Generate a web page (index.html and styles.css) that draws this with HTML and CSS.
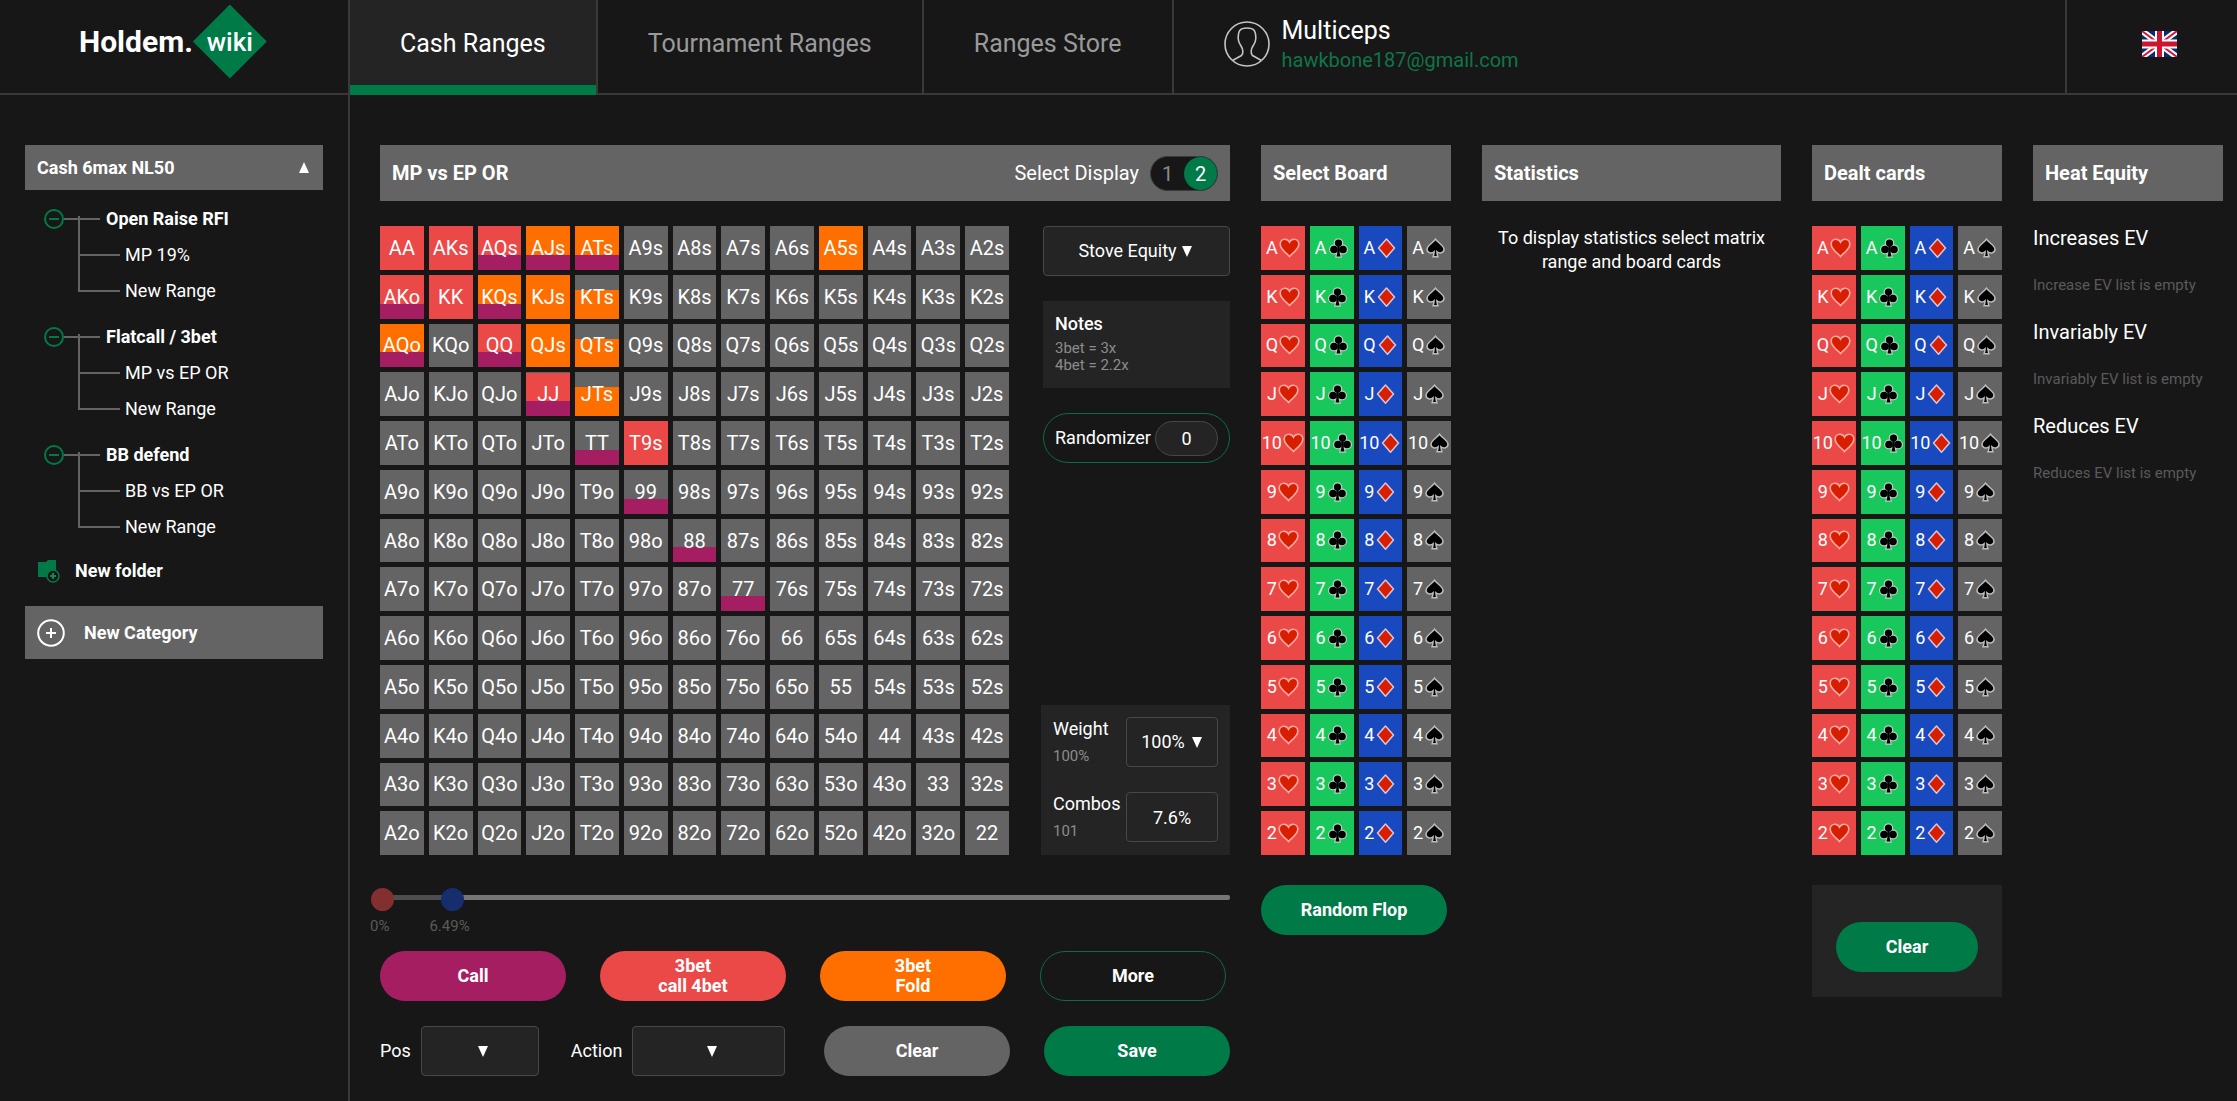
FILE: index.html
```html
<!DOCTYPE html>
<html lang="en">
<head>
<meta charset="utf-8">
<meta name="viewport" content="width=device-width, initial-scale=1">
<title>Holdem.wiki - Cash Ranges</title>
<link rel="stylesheet" href="styles.css">
</head>
<body>
<svg class="sprite" aria-hidden="true">
  <symbol id="suit-hearts" viewBox="0 0 21 20">
    <path d="M10.5 18.4C8.5 16 1.2 11.500 1.200 6.200 1.200 3.200 3.300 1.200 5.900 1.200c2 0 3.700 1.100 4.600 3 .9-1.900 2.600-3 4.600-3 2.600 0 4.700 2 4.700 5C19.800 11.500 12.500 16 10.500 18.400z" fill="#d81e00" stroke="#ffaaa2" stroke-width="1.600"/>
  </symbol>
  <symbol id="suit-clubs" viewBox="0 0 21 20">
    <g fill="#000" stroke="#b9cfc0" stroke-width="2.400">
      <circle cx="10.500" cy="5" r="3.600"/><circle cx="6" cy="11.500" r="3.800"/><circle cx="15" cy="11.500" r="3.800"/><path d="M9.300 10h2.400v5l.8 3.600h-4l.8-3.600z"/>
    </g>
    <g fill="#000">
      <circle cx="10.500" cy="5" r="3.600"/><circle cx="6" cy="11.500" r="3.800"/><circle cx="15" cy="11.500" r="3.800"/><path d="M9.300 7h2.400v8l.8 3.600h-4l.8-3.600z"/>
    </g>
  </symbol>
  <symbol id="suit-diamonds" viewBox="0 0 21 20">
    <path d="M10.500 1 18.500 10 10.500 19.200 2.500 10z" fill="#d81e00" stroke="#d9c6d8" stroke-width="1.500" stroke-linejoin="round"/>
  </symbol>
  <symbol id="suit-spades" viewBox="0 0 21 20">
    <path d="M10.500 1.200C12.500 4.500 19 7.500 19 11.300c0 3.800-4.600 4.700-7.100 2.400.1 2 .5 3.600 1 5H8.100c.5-1.400.9-3 1-5C6.600 16 2 15.100 2 11.300 2 7.500 8.500 4.500 10.500 1.200z" fill="#000" stroke="#bcbcbc" stroke-width="1.500"/>
  </symbol>
</svg>

<header class="topbar">
  <a class="logo" href="#">
    <span>Holdem.</span>
    <span class="logo-mark">wiki</span>
  </a>
  <nav class="tabs">
    <a class="tab tab-active" href="#">Cash Ranges</a>
    <a class="tab" href="#">Tournament Ranges</a>
    <a class="tab" href="#">Ranges Store</a>
  </nav>
  <div class="user">
    <svg class="avatar" viewBox="0 0 46 46" fill="none" stroke="#c4c4c4" stroke-width="1.600" aria-hidden="true">
      <circle cx="23" cy="23" r="22"/>
      <path d="M8.500 39.500l9-5c1.200-.8 1.500-2 1.300-4.500-.1-2-.8-3.500-1.800-5-1.500-2.200-2.800-4-2.800-7.500 0-7.500 1.300-10.500 8.800-10.500s8.800 3 8.800 10.500c0 3.500-1.300 5.300-2.800 7.500-1 1.500-1.700 3-1.800 5-.2 2.500.1 3.700 1.300 4.500l9 5"/>
    </svg>
    <div>
      <div class="user-name">Multiceps</div>
      <a class="user-mail" href="#">hawkbone187@gmail.com</a>
    </div>
  </div>
  <button class="lang" type="button" aria-label="English">
    <svg width="35" height="26" viewBox="0 0 35 26" aria-hidden="true">
      <path fill="#0b2a6f" d="M0 0h35v26H0z"/>
      <path d="M0 0 35 26M35 0 0 26" stroke="#fff" stroke-width="6"/>
      <path d="M0 0 35 26M35 0 0 26" stroke="#cf1b3a" stroke-width="2"/>
      <path d="M17.500 0v26M0 13h35" stroke="#fff" stroke-width="9"/>
      <path d="M17.500 0v26M0 13h35" stroke="#cf1432" stroke-width="5"/>
    </svg>
  </button>
</header>

<div class="layout">
  <aside class="sidebar">
    <button class="category" type="button"><span>Cash 6max NL50</span>
      <svg width="10" height="11" viewBox="0 0 10 11" aria-hidden="true"><path d="M5 0 10 11H0z" fill="#fff"/></svg>
    </button>
    <section class="folder">
      <h2 class="folder-name"><button class="collapse" type="button" aria-label="Collapse"></button>Open Raise RFI</h2>
      <ul class="ranges"><li><a href="#">MP 19%</a></li><li><a href="#">New Range</a></li></ul>
    </section>
    <section class="folder">
      <h2 class="folder-name"><button class="collapse" type="button" aria-label="Collapse"></button>Flatcall / 3bet</h2>
      <ul class="ranges"><li><a href="#">MP vs EP OR</a></li><li><a href="#">New Range</a></li></ul>
    </section>
    <section class="folder">
      <h2 class="folder-name"><button class="collapse" type="button" aria-label="Collapse"></button>BB defend</h2>
      <ul class="ranges"><li><a href="#">BB vs EP OR</a></li><li><a href="#">New Range</a></li></ul>
    </section>
    <button class="new-folder" type="button">
      <svg width="23" height="24" viewBox="0 0 23 24" aria-hidden="true">
        <path d="M0 3h8l2-2h8v17H0z" fill="#007a47"/>
        <circle cx="15" cy="17" r="6" fill="#171717" stroke="#0a7549" stroke-width="1.500"/>
        <path d="M15 14v6M12 17h6" stroke="#0a8a54" stroke-width="2"/>
      </svg>New folder</button>
    <button class="new-category" type="button">
      <svg width="28" height="28" viewBox="0 0 28 28" fill="none" stroke="#fff" stroke-width="2" aria-hidden="true">
        <circle cx="14" cy="14" r="12.800"/><path d="M14 9v10M9 14h10"/>
      </svg>New Category</button>
  </aside>

  <main class="content">
    <section class="column">
      <div class="panel-title">
        <h1>MP vs EP OR</h1>
        <fieldset class="display">
          <legend>Select Display</legend>
          <span aria-hidden="true">Select Display</span>
          <div class="toggle">
            <label><input type="radio" name="display"><span>1</span></label>
            <label><input type="radio" name="display" checked><span>2</span></label>
          </div>
        </fieldset>
      </div>
      <div class="board">
        <div class="matrix" id="matrix"></div>
        <div class="tools">
          <select class="select select-equity" aria-label="Equity mode"><option>Stove Equity</option></select>
          <div class="notes">
            <h2>Notes</h2>
            <p>3bet = 3x<br>4bet = 2.2x</p>
          </div>
          <div class="randomizer"><label for="random">Randomizer</label><input id="random" type="text" value="0"></div>
          <div class="weights">
            <div class="weight-row">
              <div><label for="weight">Weight</label><p>100%</p></div>
              <select class="select select-weight" id="weight"><option>100%</option></select>
            </div>
            <div class="weight-row">
              <div><label for="combos">Combos</label><p>101</p></div>
              <input class="combo" id="combos" type="text" value="7.6%">
            </div>
          </div>
        </div>
      </div>
      <div class="range">
        <div class="range-track">
          <input class="thumb-red" type="range" min="0" max="100" step="0.1" value="0" aria-label="Range start">
          <input class="thumb-blue" type="range" min="0" max="100" step="0.1" value="8.4" aria-label="Range end">
        </div>
        <div class="range-labels"><span>0%</span><span>6.49%</span></div>
      </div>
      <div class="actions">
        <button class="pill pill-call" type="button">Call</button>
        <button class="pill pill-raise" type="button">3bet<br>call 4bet</button>
        <button class="pill pill-fold" type="button">3bet<br>Fold</button>
        <button class="pill pill-outline" type="button">More</button>
      </div>
      <div class="filters">
        <label for="pos">Pos</label>
        <select class="select select-pos" id="pos"><option></option></select>
        <label class="action-label" for="action">Action</label>
        <select class="select select-action" id="action"><option></option></select>
        <div class="filter-buttons">
          <button class="pill pill-gray" type="button">Clear</button>
          <button class="pill" type="button">Save</button>
        </div>
      </div>
    </section>

    <section class="column">
      <h2 class="panel-title">Select Board</h2>
      <div class="cards"></div>
      <button class="pill pill-flop" type="button">Random Flop</button>
    </section>

    <section class="column">
      <h2 class="panel-title">Statistics</h2>
      <p class="hint">To display statistics select matrix range and board cards</p>
    </section>

    <section class="column">
      <h2 class="panel-title">Dealt cards</h2>
      <div class="cards"></div>
      <div class="dealt-footer"><button class="pill" type="button">Clear</button></div>
    </section>

    <section class="column">
      <h2 class="panel-title">Heat Equity</h2>
      <dl class="heat">
        <dt>Increases EV</dt><dd>Increase EV list is empty</dd>
        <dt>Invariably EV</dt><dd>Invariably EV list is empty</dd>
        <dt>Reduces EV</dt><dd>Reduces EV list is empty</dd>
      </dl>
    </section>
  </main>
</div>
<script src="app.js"></script>
</body>
</html>
```
FILE: styles.css
```css
:root {
  --bg: #171717;
  --surface: #242424;
  --gray: #646464;
  --line: #393939;
  --edge: #484848;
  --muted: #8c8c8c;
  --dim: #5a5a5a;
  --green: #007a47;
  --red: #eb4848;
  --orange: #ff6f00;
  --call: #a61e62;
}

* { box-sizing: border-box; }

body {
  margin: 0;
  min-height: 100vh;
  display: flex;
  flex-direction: column;
  background: var(--bg);
  color: #fff;
  font: 18px/24px Roboto, "Liberation Sans", sans-serif;
}

h1, h2, p, ul, dl, dd { margin: 0; padding: 0; }
h1, h2 { font-size: inherit; }
ul { list-style: none; }
a { color: inherit; text-decoration: none; }
button, input, select { font: inherit; color: inherit; margin: 0; }
button { border: 0; cursor: pointer; padding: 0; }
.sprite { display: none; }

/* Top bar */
.topbar {
  display: flex;
  height: 95px;
  border-bottom: 2px solid var(--line);
}
.logo {
  display: flex;
  align-items: center;
  width: 350px;
  padding: 0 0 10px 79px;
  border-right: 2px solid var(--line);
  font-size: 30px;
  font-weight: 700;
}
.logo-mark {
  display: flex;
  align-items: center;
  justify-content: center;
  width: 74px;
  height: 74px;
  background: var(--green);
  clip-path: polygon(50% 0, 100% 50%, 50% 100%, 0 50%);
  font-size: 26px;
  font-weight: 500;
}
.tabs { display: flex; }
.tab {
  display: flex;
  align-items: center;
  padding: 0 50px 5px;
  border-right: 2px solid var(--line);
  color: #9a9a9a;
  font-size: 25px;
}
.tab-active {
  margin-bottom: -2px;
  padding-top: 10px;
  padding-bottom: 7px;
  border-bottom: 10px solid var(--green);
  border-right: 0;
  background: var(--surface);
  color: #fff;
  box-shadow: 2px 0 var(--line);
}
.tab-active + .tab { margin-left: 2px; }
.user {
  display: flex;
  align-items: center;
  gap: 12px;
  padding: 0 50px 5px;
}
.avatar { width: 46px; height: 46px; }
.user-name { font-size: 25px; line-height: 32px; }
.user-mail { display: block; font-size: 20px; line-height: 26px; color: #0f7549; }
.lang {
  width: 172px;
  margin-left: auto;
  padding: 0 0 5px 15px;
  background: none;
  border-left: 2px solid var(--line);
}
.lang svg { display: block; margin: auto; }

/* Sidebar */
.layout { display: flex; flex: 1; }
.sidebar {
  flex: none;
  width: 350px;
  padding: 50px 25px 30px;
  border-right: 2px solid var(--line);
}
.category, .new-category {
  display: flex;
  align-items: center;
  width: 100%;
  background: var(--gray);
  font-weight: 700;
}
.category {
  justify-content: space-between;
  height: 45px;
  margin-bottom: 11px;
  padding: 0 14px 0 12px;
}
.folder { margin-bottom: 10px; padding-left: 19px; }
.folder-name {
  position: relative;
  display: flex;
  align-items: center;
  gap: 42px;
  height: 36px;
}
.folder-name::after {
  content: "";
  position: absolute;
  left: 20px;
  width: 36px;
  height: 2px;
  background: var(--gray);
}
.collapse {
  width: 20px;
  height: 20px;
  border: 2px solid var(--green);
  border-radius: 50%;
  background: linear-gradient(var(--green), var(--green)) center / 10px 2px no-repeat;
}
.ranges { padding-left: 34px; }
.ranges li { position: relative; height: 36px; padding-left: 47px; line-height: 36px; }
.ranges li::before {
  content: "";
  position: absolute;
  left: 0;
  bottom: 17px;
  width: 40px;
  height: 38px;
  border: solid var(--gray);
  border-width: 0 0 2px 2px;
}
.new-folder {
  display: flex;
  align-items: center;
  gap: 14px;
  height: 36px;
  margin: -2px 0 17px;
  padding-left: 13px;
  background: none;
  font-weight: 700;
}
.new-category { gap: 19px; height: 53px; padding-left: 12px; }

/* Main columns */
.content {
  flex: 1;
  display: grid;
  grid-template-columns: 850fr 190fr 299fr 190fr 190fr;
  gap: 31px;
  align-items: start;
  padding: 50px 14px 25px 30px;
}
.column { min-width: 0; }
.panel-title {
  display: flex;
  align-items: center;
  justify-content: space-between;
  height: 56px;
  margin-bottom: 25px;
  padding: 0 12px;
  background: var(--gray);
  font-size: 20px;
  font-weight: 700;
}
.display {
  display: flex;
  align-items: center;
  gap: 11px;
  margin: 0;
  padding: 0;
  border: 0;
  font-weight: 400;
}
.display legend, .toggle input { position: absolute; opacity: 0; width: 1px; height: 1px; overflow: hidden; }
.toggle {
  display: flex;
  border: 1px solid #3c3c3c;
  border-radius: 18px;
  background: var(--bg);
}
.toggle span {
  display: block;
  width: 33px;
  height: 33px;
  border-radius: 50%;
  line-height: 34px;
  text-align: center;
  color: var(--muted);
}
.toggle input:checked + span { background: var(--green); color: #fff; }

.board { display: grid; grid-template-columns: 629fr 187fr; gap: 34px; }
.matrix { display: grid; grid-template-columns: repeat(13, 1fr); gap: 5px; }
.cell, .card {
  display: flex;
  align-items: center;
  justify-content: center;
  min-width: 0;
  aspect-ratio: 1;
  background: var(--gray);
}
.cell { font-size: 20px; }
.cell.raise { background: var(--red); }
.cell.fold { background: var(--orange); }
.cell.raise-call { background: linear-gradient(var(--red) 66%, var(--call) 66%); }
.cell.fold-call { background: linear-gradient(var(--orange) 66%, var(--call) 66%); }
.cell.part-fold { background: linear-gradient(var(--gray) 34%, var(--orange) 34%); }
.cell.part-call { background: linear-gradient(var(--gray) 66%, var(--call) 66%); }
.cell.part-raise-call { background: linear-gradient(var(--gray) 2%, var(--red) 2% 66%, var(--call) 66%); }

.cards { display: grid; grid-template-columns: repeat(4, 1fr); gap: 5px; margin-bottom: 30px; }
.card { gap: 1px; }
.card svg { flex: none; width: 21px; height: 20px; }
.card.hearts { background: var(--red); }
.card.clubs { background: #19c85c; }
.card.diamonds { background: #1849bf; }

/* Tools next to the matrix */
.tools { display: flex; flex-direction: column; gap: 25px; }
.select, .combo {
  height: 50px;
  border: 1px solid var(--edge);
  border-radius: 4px;
  background: var(--surface);
  text-align: center;
}
.select {
  appearance: none;
  background-image: url("data:image/svg+xml,%3Csvg xmlns='http://www.w3.org/2000/svg' width='10' height='11'%3E%3Cpath d='M0 0h10L5 11z' fill='%23fff'/%3E%3C/svg%3E");
  background-repeat: no-repeat;
  background-position: center;
  text-align-last: center;
}
.select-equity { padding-right: 18px; background-position: calc(50% + 50px) 50%; }
.notes { height: 87px; padding: 11px 12px; background: var(--surface); }
.notes h2 { font-weight: 500; }
.notes p { padding-top: 4px; font-size: 15px; line-height: 17px; color: var(--muted); }
.randomizer {
  display: flex;
  align-items: center;
  justify-content: space-between;
  height: 50px;
  padding: 0 11px;
  border: 1px solid #0d6b45;
  border-radius: 25px;
}
.randomizer input {
  width: 63px;
  height: 35px;
  border: 1px solid var(--edge);
  border-radius: 18px;
  background: var(--surface);
  text-align: center;
}
.weights {
  display: flex;
  flex-direction: column;
  gap: 25px;
  margin: auto 0 0 -2px;
  padding: 12px 12px 13px;
  background: var(--surface);
}
.weight-row { display: flex; justify-content: space-between; height: 50px; }
.weight-row p { padding-top: 4px; font-size: 15px; line-height: 22px; color: var(--muted); }
.select-weight, .combo { width: 92px; }
.select-weight { padding-right: 18px; background-position: calc(50% + 25px) 50%; }

/* Percent range */
.range { padding: 40px 0 13px; }
.range-track {
  position: relative;
  height: 5px;
  border-radius: 2px;
  background: linear-gradient(90deg, #4d4d4d 8%, #757575 8%);
}
.range-track input {
  position: absolute;
  top: -8px;
  left: -9px;
  width: calc(100% + 9px);
  height: 25px;
  appearance: none;
  background: none;
  pointer-events: none;
}
.range-track input::-webkit-slider-thumb {
  appearance: none;
  width: 23px;
  height: 23px;
  border-radius: 50%;
  background: #842f2f;
  pointer-events: auto;
}
.range-track .thumb-blue::-webkit-slider-thumb { background: #172e6e; }
.range-labels {
  display: flex;
  gap: 40px;
  margin: 14px 0 0 -10px;
  font-size: 15px;
  color: var(--dim);
}

/* Buttons and filters */
.pill {
  width: 186px;
  height: 50px;
  border-radius: 25px;
  background: var(--green);
  font-weight: 700;
  line-height: 20px;
}
.pill-call { background: var(--call); }
.pill-raise { background: var(--red); }
.pill-fold { background: var(--orange); }
.pill-gray { background: var(--gray); }
.pill-outline { background: none; border: 1px solid #0d6b45; }
.actions, .filter-buttons { display: flex; gap: 34px; }
.actions { margin-bottom: 25px; }
.filters { display: flex; align-items: center; gap: 10px; }
.action-label { margin-left: 22px; }
.select-pos { width: 118px; background-position: calc(50% + 3px) 50%; }
.select-action { width: 153px; background-position: calc(50% + 3px) 50%; }
.filter-buttons { margin-left: auto; }

.hint { max-width: 270px; margin: auto; text-align: center; }
.dealt-footer { display: flex; justify-content: center; padding: 37px 24px 25px; background: var(--surface); }
.dealt-footer .pill { width: 142px; }
.heat dt, .heat dd { height: 47px; }
.heat dt { font-size: 20px; }
.heat dd { font-size: 15px; color: var(--dim); }
```
FILE: app.js
```js
const RANKS = ["A", "K", "Q", "J", "T", "9", "8", "7", "6", "5", "4", "3", "2"];
const SUITS = ["hearts", "clubs", "diamonds", "spades"];

// Actions assigned to each starting hand; all other hands are folded.
const PLAYED = {
  "raise": ["AA", "AKs", "KK", "T9s"],
  "fold": ["A5s", "KJs", "QJs"],
  "raise-call": ["AQs", "AKo", "QQ"],
  "fold-call": ["AJs", "ATs", "KQs", "AQo"],
  "part-fold": ["KTs", "QTs", "JTs"],
  "part-call": ["TT", "99", "88", "77"],
  "part-raise-call": ["JJ"]
};

function handName(row, col) {
  if (row === col) return RANKS[row] + RANKS[row];
  return row < col ? RANKS[row] + RANKS[col] + "s" : RANKS[col] + RANKS[row] + "o";
}

const matrix = document.getElementById("matrix");
RANKS.forEach((_, row) => RANKS.forEach((_, col) => {
  const hand = handName(row, col);
  const action = Object.keys(PLAYED).find(key => PLAYED[key].includes(hand));
  const cell = document.createElement("button");
  cell.type = "button";
  cell.className = action ? "cell " + action : "cell";
  cell.textContent = hand;
  matrix.append(cell);
}));

document.querySelectorAll(".cards").forEach(deck => {
  deck.innerHTML = RANKS.map(rank => SUITS.map(suit =>
    `<button type="button" class="card ${suit}"><span>${rank === "T" ? "10" : rank}</span>` +
    `<svg role="img" aria-label="${suit}"><use href="#suit-${suit}"/></svg></button>`
  ).join("")).join("");
});
```
